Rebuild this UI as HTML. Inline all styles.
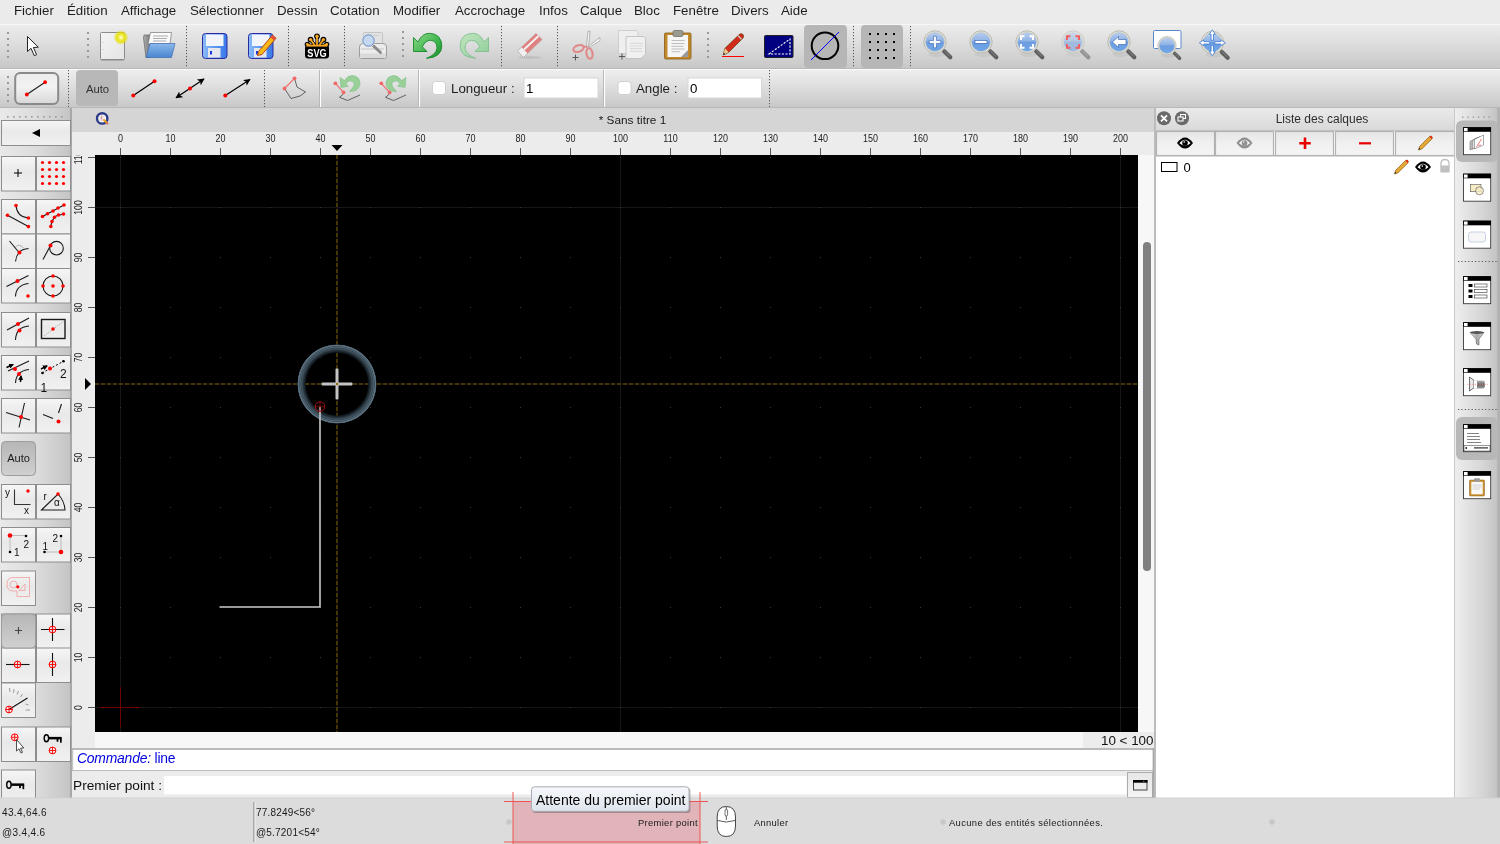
<!DOCTYPE html>
<html><head><meta charset="utf-8">
<style>
*{box-sizing:border-box;margin:0;padding:0}
html,body{width:1500px;height:844px;overflow:hidden;background:#ececec;font-family:"Liberation Sans",sans-serif;color:#222}
.a{position:absolute}
#menu{left:0;top:0;width:1500px;height:24px;background:#ebebeb}
#menu span{position:absolute;top:3px;font-size:13.3px;color:#1e1e1e;white-space:nowrap}
#tb1{left:0;top:24px;width:1500px;height:45px;background:linear-gradient(#ececec,#e0e0e0 35%,#c8c8c8);border-top:1px solid #f6f6f6;border-bottom:1.5px solid #b8b8b8}
#tb2{left:0;top:69px;width:1500px;height:39px;background:linear-gradient(#eeeeee,#e0e0e0 40%,#c8c8c8);border-top:1px solid #fafafa;border-bottom:1.5px solid #b8b8b8}
.vdots{position:absolute;width:2px;background:repeating-linear-gradient(#8a8a8a 0 2px,transparent 2px 5px)}
.vsep{position:absolute;width:1px;background:repeating-linear-gradient(#6a6a6a 0 1px,transparent 1px 3px)}
#ldock{left:0;top:108px;width:72px;height:690px;background:linear-gradient(90deg,#e6e6e6,#d6d6d6 60%,#c4c4c4)}
#doc{left:72px;top:108px;width:1082px;height:690px;background:#ececec}
#doctitle{left:72px;top:108px;width:1082px;height:24px;background:#d5d5d5}
#canvas{left:95px;top:155px;width:1043px;height:577px;background:#000}
#rpanel{left:1154px;top:108px;width:301px;height:690px;background:#fff;border-left:2px solid #bcbcbc}
#rtb{left:1455px;top:108px;width:45px;height:690px;background:linear-gradient(90deg,#efefef,#d8d8d8 60%,#c2c2c2 95%,#b0b0b0)}
#status{left:0;top:798px;width:1500px;height:46px;background:#dcdcdc}
.a{will-change:transform}</style></head><body>
<div id="menu" class="a">
<span style="left:14px">Fichier</span><span style="left:67px">Édition</span><span style="left:121px">Affichage</span><span style="left:190px">Sélectionner</span><span style="left:277px">Dessin</span><span style="left:330px">Cotation</span><span style="left:393px">Modifier</span><span style="left:455px">Accrochage</span><span style="left:539px">Infos</span><span style="left:580px">Calque</span><span style="left:634px">Bloc</span><span style="left:673px">Fenêtre</span><span style="left:731px">Divers</span><span style="left:781px">Aide</span>
</div>
<div id="tb1" class="a"></div>
<div id="tb2" class="a"></div>
<svg class="a" style="left:0;top:24px" width="1500" height="84" viewBox="0 24 1500 84">
<defs>
<linearGradient id="gblue" x1="0" y1="0" x2="0" y2="1"><stop offset="0" stop-color="#b7cdef"/><stop offset=".45" stop-color="#8fb2e6"/><stop offset=".5" stop-color="#6d9de0"/><stop offset="1" stop-color="#6ea6e8"/></linearGradient>
<radialGradient id="gglow"><stop offset="0" stop-color="#ffffff"/><stop offset=".25" stop-color="#f4f060"/><stop offset=".6" stop-color="#e8e000" stop-opacity=".9"/><stop offset="1" stop-color="#e8e000" stop-opacity="0"/></radialGradient>
<linearGradient id="gpage" x1="0" y1="0" x2="1" y2="1"><stop offset="0" stop-color="#f4f4f4"/><stop offset="1" stop-color="#e4e4e4"/></linearGradient>
<linearGradient id="gflop" x1="0" y1="0" x2="1" y2="0"><stop offset="0" stop-color="#8cbcf8"/><stop offset=".5" stop-color="#5a98f0"/><stop offset="1" stop-color="#3a78e8"/></linearGradient>
<linearGradient id="ggreen" x1="0" y1="0" x2="1" y2="1"><stop offset="0" stop-color="#8fd98a"/><stop offset=".6" stop-color="#3cb44a"/><stop offset="1" stop-color="#1e8c32"/></linearGradient>
<linearGradient id="ggreen2" x1="0" y1="0" x2="1" y2="1"><stop offset="0" stop-color="#c4e6c0"/><stop offset="1" stop-color="#8ccc98"/></linearGradient>
<g id="mag">
 <ellipse cx="2" cy="12" rx="9" ry="3" fill="#000" opacity=".05"/>
 <line x1="9.2" y1="9.2" x2="15.3" y2="15.3" stroke="#5e5e5e" stroke-width="4.2" stroke-linecap="round"/>
 <line x1="9.6" y1="9" x2="14.6" y2="14" stroke="#8a8a8a" stroke-width="1" stroke-linecap="round"/>
 <circle r="11.2" fill="#e0e0d6" stroke="#b0b0a6" stroke-width=".8"/>
 <circle r="9.3" fill="url(#gblue)" stroke="#a8b8cc" stroke-width=".6"/>
</g>
</defs>
<!-- handles -->
<g fill="#999">
<rect x="7" y="32" width="2" height="2"/><rect x="7" y="38" width="2" height="2"/><rect x="7" y="44" width="2" height="2"/><rect x="7" y="50" width="2" height="2"/><rect x="7" y="56" width="2" height="2"/>
<rect x="87" y="32" width="2" height="2"/><rect x="87" y="38" width="2" height="2"/><rect x="87" y="44" width="2" height="2"/><rect x="87" y="50" width="2" height="2"/><rect x="87" y="56" width="2" height="2"/>
<rect x="402" y="31" width="2" height="2"/><rect x="402" y="37" width="2" height="2"/><rect x="402" y="43" width="2" height="2"/><rect x="402" y="49" width="2" height="2"/><rect x="402" y="55" width="2" height="2"/>
<rect x="707" y="32" width="2" height="2"/><rect x="707" y="38" width="2" height="2"/><rect x="707" y="44" width="2" height="2"/><rect x="707" y="50" width="2" height="2"/><rect x="707" y="56" width="2" height="2"/>
</g>
<g stroke="#555" stroke-width="1" stroke-dasharray="1.2 1.8">
<line x1="186.5" y1="26" x2="186.5" y2="67"/><line x1="288.5" y1="26" x2="288.5" y2="67"/><line x1="344.5" y1="26" x2="344.5" y2="67"/>
<line x1="501.5" y1="26" x2="501.5" y2="67"/><line x1="557.5" y1="26" x2="557.5" y2="67"/><line x1="853.5" y1="26" x2="853.5" y2="67"/><line x1="910.5" y1="26" x2="910.5" y2="67"/>
</g>
<!-- arrow -->
<path d="M27.5 36.5 L27.5 51.5 L31 48.3 L34.3 55.7 L36.6 54.7 L33.4 47.5 L38.3 47.2 Z" fill="#fff" stroke="#222" stroke-width="1" stroke-linejoin="round"/>
<!-- new doc -->
<defs><linearGradient id="gfold" x1="0" y1="0" x2="0" y2="1"><stop offset="0" stop-color="#8cb8ec"/><stop offset="1" stop-color="#4a86d0"/></linearGradient>
<linearGradient id="gback" x1="0" y1="0" x2="1" y2="0"><stop offset="0" stop-color="#b0b0b0"/><stop offset="1" stop-color="#707070"/></linearGradient></defs>
<rect x="100.5" y="34" width="24" height="27" rx="1.5" fill="#555" opacity=".3"/>
<rect x="100.5" y="32.5" width="24" height="27" rx="1" fill="url(#gpage)" stroke="#8c8c8c"/>
<path d="M102.5 42.5 h1 M102.5 49.5 h1" stroke="#bbb" stroke-width=".8"/>
<circle cx="121" cy="37.5" r="7.5" fill="url(#gglow)"/>
<!-- open folder -->
<path d="M144 35 L151 35 L150 57.5 L146 57.5 L143.5 38 Z" fill="url(#gback)" stroke="#666" stroke-width=".7"/>
<path d="M150.5 32.5 L171.5 32.5 L170 44 L148 44 Z" fill="#fafafa" stroke="#777" stroke-width=".7"/>
<path d="M153 36 L168 36 M153 38.5 L167 38.5 M153 41 L166 41" stroke="#aaa" stroke-width="1.1"/>
<path d="M150 43.5 L175 43.5 L171.5 57.5 L146 57.5 Z" fill="url(#gfold)" stroke="#3c6cb0" stroke-width=".7"/>
<!-- save -->
<g id="floppy">
<rect x="202.5" y="33.5" width="24.5" height="25" rx="3" fill="url(#gflop)" stroke="#2a2aa0" stroke-width="1"/>
<rect x="206" y="34.5" width="17.5" height="11.5" fill="#f2f4fc"/>
<rect x="208" y="48" width="12.5" height="9.5" fill="#e6e6ee"/>
<rect x="210" y="51" width="2" height="3.5" fill="#1a3ae0"/>
</g>
<use href="#floppy" x="46"/>
<path d="M258.5 51.5 L272.5 35 L276 38.3 L262 54.5 L257.5 55.5 Z" fill="#f5b818" stroke="#b03a10" stroke-width=".9"/>
<path d="M272.5 35 L276 38.3 L274 40.5 L270.5 37.2Z" fill="#e84a3a"/>
<!-- svg logo -->
<g stroke="#000" stroke-width="3.2" stroke-linecap="round" fill="none">
<path d="M317 36.5 L317 45 M310.8 39.8 L314.5 45 M323.2 39.8 L319.5 45 M307.5 44.5 L311 45.5 M326.5 44.5 L323 45.5"/>
</g>
<g fill="#000"><circle cx="317" cy="36.3" r="2.9"/><circle cx="310.6" cy="39.6" r="2.9"/><circle cx="323.4" cy="39.6" r="2.9"/><circle cx="307.3" cy="44.3" r="2.6"/><circle cx="326.7" cy="44.3" r="2.6"/></g>
<g stroke="#f7a823" stroke-width="1.8" stroke-linecap="round" fill="none">
<path d="M317 36.5 L317 45 M310.8 39.8 L314.5 45 M323.2 39.8 L319.5 45 M307.5 44.5 L311 45.5 M326.5 44.5 L323 45.5"/>
</g>
<g fill="#f7a823"><circle cx="317" cy="36.3" r="1.7"/><circle cx="310.6" cy="39.6" r="1.7"/><circle cx="323.4" cy="39.6" r="1.7"/><circle cx="307.3" cy="44.3" r="1.4"/><circle cx="326.7" cy="44.3" r="1.4"/></g>
<rect x="305" y="45" width="24" height="13.5" rx="3" fill="#000"/>
<rect x="306.5" y="44.8" width="21" height="1.8" fill="#f7a823"/>
<text transform="translate(317 56.8) scale(.8 1)" font-family="Liberation Sans" font-weight="bold" font-size="11.5" fill="#fff" text-anchor="middle">SVG</text>
<!-- print preview -->
<rect x="363.5" y="32.5" width="19" height="14" rx="1" fill="#e2e2e2" stroke="#c4c4c4"/>
<rect x="367" y="35" width="12" height="1" fill="#cfcfcf"/>
<path d="M359.5 47 Q359.5 43.5 363 43.5 L383 43.5 Q386.5 43.5 386.5 47 L386.5 56.5 Q386.5 58.5 384.5 58.5 L361.5 58.5 Q359.5 58.5 359.5 56.5 Z" fill="#ececec" stroke="#9c9c9c"/>
<rect x="360" y="53.5" width="26" height="4.5" fill="#dadada"/>
<path d="M361 49 L384 49" stroke="#bdbdbd" stroke-width=".8"/>
<line x1="372.5" y1="45" x2="380.5" y2="52.5" stroke="#8a8a8a" stroke-width="3" stroke-linecap="round"/>
<circle cx="368.5" cy="40.5" r="6.6" fill="#e8e8e8"/>
<circle cx="368.5" cy="40.5" r="5.7" fill="#c6d8f0" stroke="#5c88c4" stroke-width="1"/>
<!-- undo -->
<path d="M413.5 37.5 L413.5 51.5 L427 51.5 L422.3 46.8 Q425.5 40.3 430.5 40.3 Q437 41 437 48 Q436.5 54.5 426.5 58.3 Q441.5 57.5 441.8 46 Q441.5 34 429.5 33.3 Q422 33.3 418 42 Z" fill="url(#ggreen)" stroke="#168a2a" stroke-width=".9" stroke-linejoin="round"/>
<!-- redo -->
<path d="M 488.5 37.5 L 488.5 51.5 L 475 51.5 L 479.7 46.8 Q 476.5 40.3 471.5 40.3 Q 465 41 465 48 Q 465.5 54.5 475.5 58.3 Q 460.5 57.5 460.2 46 Q 460.5 34 472.5 33.3 Q 480 33.3 484 42 Z" fill="url(#ggreen2)" stroke="#7fc08e" stroke-width=".9" stroke-linejoin="round"/>
<!-- eraser -->
<ellipse cx="530" cy="57.5" rx="12" ry="1.5" fill="#000" opacity=".08"/>
<path d="M517.5 51 L536 33.5 L542 39.5 L523.5 57.5 Z" fill="#f0f0f0" stroke="#a8a8a8" stroke-width=".8"/>
<path d="M521.5 47.2 L536 33.5 L542 39.5 L527.5 53.2 Z" fill="#e08080"/>
<path d="M524 49.5 L538.5 36" stroke="#f4f4f4" stroke-width="1.8"/>
<!-- scissors -->
<path d="M588 31.3 L590 31.3 L588.5 47 L586.5 47 Z" fill="#fafafa" stroke="#999" stroke-width=".7"/>
<path d="M589 46 L599.8 37.5 L600 40.5 L589.5 47.5 Z" fill="#fafafa" stroke="#999" stroke-width=".7"/>
<ellipse cx="578.5" cy="48.5" rx="5.3" ry="3.2" transform="rotate(-20 578.5 48.5)" fill="none" stroke="#e08a8a" stroke-width="2.2"/>
<ellipse cx="589.5" cy="53.5" rx="3" ry="5.3" transform="rotate(-10 589.5 53.5)" fill="none" stroke="#e08a8a" stroke-width="2.2"/>
<path d="M583.5 47 L587.5 46.5" stroke="#e08a8a" stroke-width="2"/>
<path d="M572.5 57.5 L578.5 57.5 M575.5 54.5 L575.5 60.5" stroke="#555" stroke-width="1"/>
<!-- copy -->
<path d="M618.5 30.5 L636.5 30.5 L638 32 L638 53.5 L618.5 53.5 Z" fill="#efefef" stroke="#c8c8c8" stroke-width=".8"/>
<path d="M626 36.5 L643.5 36.5 L645.5 38.5 L645.5 54 L641 58.5 L626 58.5 Z" fill="#f0f0f0" stroke="#bbb" stroke-width=".8"/>
<path d="M630 43.3 L643 43.3 M630 46 L643 46 M630 48.6 L642 48.6 M630 51.3 L643 51.3" stroke="#d4d4d4" stroke-width=".9"/>
<path d="M619 56.5 L625 56.5 M622 53.5 L622 59.5" stroke="#555" stroke-width="1"/>
<!-- paste -->
<rect x="664.5" y="33" width="26.5" height="26" rx="1.2" fill="#c28a2e" stroke="#8a5a10" stroke-width=".8"/>
<rect x="667.5" y="35" width="20.5" height="22" fill="#f6f6f6"/>
<path d="M681 57 L688 50 L688 57 Z" fill="#999"/>
<rect x="673" y="30.5" width="10" height="6" rx="1.5" fill="#9a9a8e" stroke="#6a6a60" stroke-width=".7"/>
<path d="M671.5 40.5 L684.5 40.5 M671.5 43.5 L684.5 43.5 M671.5 46.3 L683.5 46.3 M671.5 49 L684.5 49 M671.5 51.7 L680 51.7" stroke="#b8b8b8" stroke-width=".9"/>
<!-- pencil -->
<path d="M722 56.5 L744 56.5" stroke="#f00" stroke-width="1"/>
<path d="M723.2 55 L725 48.3 L739.5 34.3 Q741.3 33 743 34.5 Q744.3 36.3 743 38 L728.7 52.3 Z" fill="#d42a1a" stroke="#6a3a10" stroke-width=".8"/>
<path d="M738 35.8 L741.5 39.3" stroke="#ccc" stroke-width="1.4"/>
<path d="M723.2 55 L725 48.3 L728.7 52.3 Z" fill="#e8c890"/>
<path d="M723.2 55 L723.8 52.7 L725.4 54.2 Z" fill="#222"/>
<!-- blue rect -->
<rect x="764.5" y="35.5" width="28.5" height="22" rx="1" fill="#000080" stroke="#222" stroke-width="1"/>
<path d="M769 54 L790 39 L790 54 Z" fill="none" stroke="#fff" stroke-width="1.1" stroke-dasharray="2.2 1.4"/>
<!-- active circle btn -->
<rect x="804" y="25" width="43" height="43" rx="4" fill="#b6b6b6"/>
<circle cx="825" cy="45.8" r="13.3" fill="none" stroke="#000" stroke-width="2"/>
<line x1="811" y1="60" x2="839" y2="32" stroke="#0000ff" stroke-width="1"/>
<!-- grid btn -->
<rect x="861" y="25" width="42" height="43" rx="4" fill="#b6b6b6"/>
<g fill="#000">
<rect x="869" y="33" width="2" height="2"/><rect x="877" y="33" width="2" height="2"/><rect x="885" y="33" width="2" height="2"/><rect x="893" y="33" width="2" height="2"/>
<rect x="869" y="41" width="2" height="2"/><rect x="877" y="41" width="2" height="2"/><rect x="885" y="41" width="2" height="2"/><rect x="893" y="41" width="2" height="2"/>
<rect x="869" y="49" width="2" height="2"/><rect x="877" y="49" width="2" height="2"/><rect x="885" y="49" width="2" height="2"/><rect x="893" y="49" width="2" height="2"/>
<rect x="869" y="57" width="2" height="2"/><rect x="877" y="57" width="2" height="2"/><rect x="885" y="57" width="2" height="2"/><rect x="893" y="57" width="2" height="2"/>
</g>
<!-- zooms -->
<use href="#mag" x="935" y="42"/>
<path d="M933.6 36.2 h2.8 v4.4 h4.4 v2.8 h-4.4 v4.4 h-2.8 v-4.4 h-4.4 v-2.8 h4.4z" fill="#fff" stroke="#2a5aa8" stroke-width=".6"/>
<use href="#mag" x="981" y="42"/>
<rect x="975" y="40.5" width="12" height="2.8" fill="#fff" stroke="#2a5aa8" stroke-width=".6"/>
<use href="#mag" x="1027" y="42"/>
<path d="M1021 40 V36.3 H1024.5 M1029.5 36.3 H1033 V40 M1033 44 V47.7 H1029.5 M1024.5 47.7 H1021 V44" fill="none" stroke="#fff" stroke-width="2"/>
<g opacity=".55"><use href="#mag" x="1073" y="42"/></g>
<path d="M1067 40 V36.3 H1070.5 M1075.5 36.3 H1079 V40 M1079 44 V47.7 H1075.5 M1070.5 47.7 H1067 V44" fill="none" stroke="#f06060" stroke-width="2"/>
<use href="#mag" x="1119" y="42"/>
<path d="M1112.5 42 L1118.5 36.5 L1118.5 39.5 L1126 39.5 L1126 44.5 L1118.5 44.5 L1118.5 47.5 Z" fill="#fff" stroke="#2a5aa8" stroke-width=".6"/>
<rect x="1153.5" y="30.5" width="27.5" height="18" rx="1.2" fill="#fff" stroke="#5a88c8" stroke-width="1"/>
<g transform="translate(1167 45.7) scale(.82)"><use href="#mag"/></g>
<use href="#mag" x="1212.4" y="42.5"/>
<g transform="translate(1212.3 42.8)"><path d="M0 -13 L3 -8.5 L1.2 -8.5 L1.2 -2.5 L-1.2 -2.5 L-1.2 -8.5 L-3 -8.5 Z" transform="rotate(0)" fill="#fff" stroke="#3a76d0" stroke-width=".8" stroke-linejoin="round"/><path d="M0 -13 L3 -8.5 L1.2 -8.5 L1.2 -2.5 L-1.2 -2.5 L-1.2 -8.5 L-3 -8.5 Z" transform="rotate(90)" fill="#fff" stroke="#3a76d0" stroke-width=".8" stroke-linejoin="round"/><path d="M0 -13 L3 -8.5 L1.2 -8.5 L1.2 -2.5 L-1.2 -2.5 L-1.2 -8.5 L-3 -8.5 Z" transform="rotate(180)" fill="#fff" stroke="#3a76d0" stroke-width=".8" stroke-linejoin="round"/><path d="M0 -13 L3 -8.5 L1.2 -8.5 L1.2 -2.5 L-1.2 -2.5 L-1.2 -8.5 L-3 -8.5 Z" transform="rotate(270)" fill="#fff" stroke="#3a76d0" stroke-width=".8" stroke-linejoin="round"/></g>
</svg>

<svg class="a" style="left:0;top:68px" width="800" height="40" viewBox="0 68 800 40">
<defs>
<linearGradient id="gbtn" x1="0" y1="0" x2="0" y2="1"><stop offset="0" stop-color="#ececec"/><stop offset=".45" stop-color="#f2f2f2"/><stop offset="1" stop-color="#d8d8d8"/></linearGradient>
<marker id="ah" viewBox="0 0 10 10" refX="9" refY="5" markerWidth="7" markerHeight="7" orient="auto-start-reverse" markerUnits="userSpaceOnUse"><path d="M0 0 L10 5 L0 10 L2.5 5 Z" fill="#000"/></marker>
</defs>
<g fill="#999">
<rect x="7" y="76" width="2" height="2"/><rect x="7" y="82" width="2" height="2"/><rect x="7" y="88" width="2" height="2"/><rect x="7" y="94" width="2" height="2"/><rect x="7" y="100" width="2" height="2"/>
</g>
<g stroke="#555" stroke-width="1" stroke-dasharray="1.2 1.8">
<line x1="68.5" y1="70" x2="68.5" y2="107"/><line x1="264.5" y1="70" x2="264.5" y2="107"/><line x1="769.5" y1="70" x2="769.5" y2="107"/>
</g>
<g stroke="#fff" stroke-width="1.2"><line x1="320.5" y1="70" x2="320.5" y2="107"/><line x1="419.5" y1="70" x2="419.5" y2="107"/><line x1="604.5" y1="70" x2="604.5" y2="107"/></g>
<g stroke="#b8b8b8" stroke-width="1"><line x1="319.5" y1="70" x2="319.5" y2="107"/><line x1="418.5" y1="70" x2="418.5" y2="107"/><line x1="603.5" y1="70" x2="603.5" y2="107"/></g>
<!-- line btn -->
<rect x="15.2" y="73" width="43" height="31" rx="5" fill="url(#gbtn)" stroke="#8a8a8a" stroke-width="2"/>
<line x1="26.8" y1="94.5" x2="45.1" y2="82.2" stroke="#222" stroke-width="1.2"/>
<circle cx="26.8" cy="94.5" r="1.9" fill="#f00"/><circle cx="45.1" cy="82.2" r="1.9" fill="#f00"/>
<!-- auto -->
<rect x="76" y="70" width="42" height="36" rx="4" fill="#b8b8b8"/>
<text x="97.5" y="92.5" font-family="Liberation Sans" font-size="11.3" fill="#333" text-anchor="middle">Auto</text>
<!-- lines -->
<line x1="133.3" y1="95.5" x2="154.5" y2="81.3" stroke="#000" stroke-width="1.2"/>
<circle cx="133.3" cy="95.5" r="2" fill="#f00"/><circle cx="154.5" cy="81.3" r="2" fill="#f00"/>
<line x1="176" y1="97.8" x2="204" y2="79" stroke="#000" stroke-width="1.2" marker-start="url(#ah)" marker-end="url(#ah)"/>
<circle cx="190" cy="88.5" r="2" fill="#f00"/>
<line x1="225.3" y1="95.5" x2="250" y2="79.5" stroke="#000" stroke-width="1.2" marker-end="url(#ah)"/>
<circle cx="225.3" cy="95.5" r="2" fill="#f00"/>
<!-- polyline -->
<path d="M294.5 78.3 L297 87 L305.5 92 L300 96 L291 98.5 L284.5 88.5" fill="none" stroke="#555" stroke-width=".9"/>
<line x1="284.5" y1="88.5" x2="294.5" y2="78.3" stroke="#f06868" stroke-width="1.1"/>
<circle cx="284.5" cy="88.5" r="1.9" fill="#f06868"/><circle cx="294.5" cy="78.3" r="1.9" fill="#f06868"/>
<!-- undo poly -->
<path d="M343.5 94 L339.5 97.3 L347.5 100.5 L360 95" fill="none" stroke="#555" stroke-width=".9"/>
<line x1="335.4" y1="83.3" x2="343.5" y2="92.3" stroke="#f06868" stroke-width="1.1"/>
<circle cx="335.4" cy="83.3" r="1.9" fill="#f06868"/><circle cx="343.5" cy="92.3" r="1.9" fill="#f06868"/>
<path d="M340 77.5 L341 87.5 L348.3 86.3 L346 83.5 Q349 79.5 352.5 81.5 Q356 84.5 352 88.5 L349.5 91.5 Q358 92 360 84.5 Q360.5 76.5 352.5 75.5 Q347.5 75.5 344.5 80.5 Z" fill="#98d098" stroke="#80c088" stroke-width=".6" stroke-linejoin="round"/>
<!-- redo poly -->
<path d="M389.5 94 L385.5 97.3 L393.5 100.5 L406 95" fill="none" stroke="#555" stroke-width=".9"/>
<line x1="381.3" y1="83.3" x2="389.6" y2="92.3" stroke="#f06868" stroke-width="1.1"/>
<circle cx="381.3" cy="83.3" r="1.9" fill="#f06868"/><circle cx="389.6" cy="92.3" r="1.9" fill="#f06868"/>
<path d="M406 77.5 L405 87.5 L397.7 86.3 L400 83.5 Q397 79.5 393.5 81.5 Q390 84.5 394 88.5 L396.5 91.5 Q388 92 386 84.5 Q385.5 76.5 393.5 75.5 Q398.5 75.5 401.5 80.5 Z" fill="#98d098" stroke="#80c088" stroke-width=".6" stroke-linejoin="round"/>
<!-- checkboxes -->
<rect x="432.5" y="81.5" width="13" height="13" rx="3" fill="#fff" stroke="#d0d0d0" stroke-width="1"/>
<rect x="618" y="81.5" width="13" height="13" rx="3" fill="#fff" stroke="#d0d0d0" stroke-width="1"/>
<text x="451" y="93" font-family="Liberation Sans" font-size="13.3" fill="#1e1e1e">Longueur :</text>
<text x="636" y="93" font-family="Liberation Sans" font-size="13.3" fill="#1e1e1e">Angle :</text>
<rect x="524" y="78" width="74" height="20" fill="#fff" stroke="#d6d6d6" stroke-width="1"/>
<rect x="688" y="78" width="73.5" height="20" fill="#fff" stroke="#d6d6d6" stroke-width="1"/>
<text x="526" y="93" font-family="Liberation Sans" font-size="13.3" fill="#000">1</text>
<text x="690" y="93" font-family="Liberation Sans" font-size="13.3" fill="#000">0</text>
</svg>

<!--DOCK-->
<svg class="a" style="left:0;top:108px" width="72" height="690" viewBox="0 108 72 690">
<defs>
<linearGradient id="dockbg" x1="0" y1="0" x2="1" y2="0"><stop offset="0" stop-color="#e9e9e9"/><stop offset=".5" stop-color="#dcdcdc"/><stop offset=".95" stop-color="#c6c6c6"/><stop offset="1" stop-color="#b8b8b8"/></linearGradient>
<linearGradient id="dbtn" x1="0" y1="0" x2="0" y2="1"><stop offset="0" stop-color="#f6f6f6"/><stop offset=".45" stop-color="#e9e9e9"/><stop offset="1" stop-color="#f1f1f1"/></linearGradient>
<marker id="dah" viewBox="0 0 10 10" refX="8" refY="5" markerWidth="5" markerHeight="5" orient="auto" markerUnits="userSpaceOnUse"><path d="M0 0 L10 5 L0 10 Z" fill="#000"/></marker>
<g id="rc"><circle r="3.4" fill="none" stroke="#f00" stroke-width="1"/><path d="M-3.4 0H3.4M0 -3.4V3.4" stroke="#f00" stroke-width=".9"/></g>
</defs>
<rect x="0" y="108" width="72" height="690" fill="url(#dockbg)"/>
<rect x="70" y="108" width="2" height="690" fill="#a9a9a9"/>
<g fill="#9a9a9a"><rect x="7" y="116" width="1.6" height="1.6"/><rect x="13" y="116" width="1.6" height="1.6"/><rect x="19" y="116" width="1.6" height="1.6"/><rect x="25" y="116" width="1.6" height="1.6"/><rect x="31" y="116" width="1.6" height="1.6"/><rect x="37" y="116" width="1.6" height="1.6"/><rect x="43" y="116" width="1.6" height="1.6"/><rect x="49" y="116" width="1.6" height="1.6"/><rect x="55" y="116" width="1.6" height="1.6"/><rect x="61" y="116" width="1.6" height="1.6"/></g>
<rect x="1.5" y="120.5" width="69" height="25" fill="url(#dbtn)" stroke="#8e8e8e" stroke-width="1"/>
<path d="M32 133 L40 129 L40 137 Z" fill="#000"/>
<rect x="1.5" y="156.5" width="34" height="34.5" fill="url(#dbtn)" stroke="#8e8e8e" stroke-width="1"/>
<rect x="36.5" y="156.5" width="34" height="34.5" fill="url(#dbtn)" stroke="#8e8e8e" stroke-width="1"/>
<rect x="1.5" y="199.5" width="34" height="34.5" fill="url(#dbtn)" stroke="#8e8e8e" stroke-width="1"/>
<rect x="36.5" y="199.5" width="34" height="34.5" fill="url(#dbtn)" stroke="#8e8e8e" stroke-width="1"/>
<rect x="1.5" y="234.0" width="34" height="34.5" fill="url(#dbtn)" stroke="#8e8e8e" stroke-width="1"/>
<rect x="36.5" y="234.0" width="34" height="34.5" fill="url(#dbtn)" stroke="#8e8e8e" stroke-width="1"/>
<rect x="1.5" y="268.5" width="34" height="34.5" fill="url(#dbtn)" stroke="#8e8e8e" stroke-width="1"/>
<rect x="36.5" y="268.5" width="34" height="34.5" fill="url(#dbtn)" stroke="#8e8e8e" stroke-width="1"/>
<rect x="1.5" y="312.5" width="34" height="34.5" fill="url(#dbtn)" stroke="#8e8e8e" stroke-width="1"/>
<rect x="36.5" y="312.5" width="34" height="34.5" fill="url(#dbtn)" stroke="#8e8e8e" stroke-width="1"/>
<rect x="1.5" y="355.5" width="34" height="34.5" fill="url(#dbtn)" stroke="#8e8e8e" stroke-width="1"/>
<rect x="36.5" y="355.5" width="34" height="34.5" fill="url(#dbtn)" stroke="#8e8e8e" stroke-width="1"/>
<rect x="1.5" y="398.5" width="34" height="34.5" fill="url(#dbtn)" stroke="#8e8e8e" stroke-width="1"/>
<rect x="36.5" y="398.5" width="34" height="34.5" fill="url(#dbtn)" stroke="#8e8e8e" stroke-width="1"/>
<rect x="1.5" y="484.5" width="34" height="34.5" fill="url(#dbtn)" stroke="#8e8e8e" stroke-width="1"/>
<rect x="36.5" y="484.5" width="34" height="34.5" fill="url(#dbtn)" stroke="#8e8e8e" stroke-width="1"/>
<rect x="1.5" y="527.5" width="34" height="34.5" fill="url(#dbtn)" stroke="#8e8e8e" stroke-width="1"/>
<rect x="36.5" y="527.5" width="34" height="34.5" fill="url(#dbtn)" stroke="#8e8e8e" stroke-width="1"/>
<rect x="1.5" y="571.0" width="34" height="34.5" fill="url(#dbtn)" stroke="#8e8e8e" stroke-width="1"/>
<rect x="1.5" y="614.0" width="34" height="34.5" fill="url(#dbtn)" stroke="#8e8e8e" stroke-width="1"/>
<rect x="36.5" y="614.0" width="34" height="34.5" fill="url(#dbtn)" stroke="#8e8e8e" stroke-width="1"/>
<rect x="1.5" y="648.0" width="34" height="34.5" fill="url(#dbtn)" stroke="#8e8e8e" stroke-width="1"/>
<rect x="36.5" y="648.0" width="34" height="34.5" fill="url(#dbtn)" stroke="#8e8e8e" stroke-width="1"/>
<rect x="1.5" y="683.0" width="34" height="34.5" fill="url(#dbtn)" stroke="#8e8e8e" stroke-width="1"/>
<rect x="1.5" y="727.0" width="34" height="34.5" fill="url(#dbtn)" stroke="#8e8e8e" stroke-width="1"/>
<rect x="36.5" y="727.0" width="34" height="34.5" fill="url(#dbtn)" stroke="#8e8e8e" stroke-width="1"/>
<rect x="1.5" y="770.0" width="34" height="34.5" fill="url(#dbtn)" stroke="#8e8e8e" stroke-width="1"/>
<linearGradient id="autog" x1="0" y1="0" x2="0" y2="1"><stop offset="0" stop-color="#b6b6b6"/><stop offset="1" stop-color="#d0d0d0"/></linearGradient><rect x="1.5" y="441.5" width="34" height="34" rx="4" fill="url(#autog)" stroke="#9c9c9c" stroke-width="1"/>
<text x="18.5" y="462.3" font-family="Liberation Sans" font-size="11" fill="#1a1a1a" text-anchor="middle">Auto</text>
<rect x="1.5" y="614" width="34" height="34" rx="4" fill="url(#autog)" stroke="#9c9c9c" stroke-width="1"/>
<path d="M14 173 H22 M18 169 V177" stroke="#000" stroke-width="1"/>
<circle cx="42.5" cy="162.5" r="1.6" fill="#f00"/>
<circle cx="42.5" cy="169.5" r="1.6" fill="#f00"/>
<circle cx="42.5" cy="176.5" r="1.6" fill="#f00"/>
<circle cx="42.5" cy="183.5" r="1.6" fill="#f00"/>
<circle cx="49.5" cy="162.5" r="1.6" fill="#f00"/>
<circle cx="49.5" cy="169.5" r="1.6" fill="#f00"/>
<circle cx="49.5" cy="176.5" r="1.6" fill="#f00"/>
<circle cx="49.5" cy="183.5" r="1.6" fill="#f00"/>
<circle cx="56.5" cy="162.5" r="1.6" fill="#f00"/>
<circle cx="56.5" cy="169.5" r="1.6" fill="#f00"/>
<circle cx="56.5" cy="176.5" r="1.6" fill="#f00"/>
<circle cx="56.5" cy="183.5" r="1.6" fill="#f00"/>
<circle cx="63.5" cy="162.5" r="1.6" fill="#f00"/>
<circle cx="63.5" cy="169.5" r="1.6" fill="#f00"/>
<circle cx="63.5" cy="176.5" r="1.6" fill="#f00"/>
<circle cx="63.5" cy="183.5" r="1.6" fill="#f00"/>
<path d="M7.5 215.3 L28.4 226.6 M16 205.5 Q17 217 28.4 218" stroke="#1a1a1a" stroke-width="1.1" fill="none"/>
<circle cx="7.5" cy="215.3" r="1.8" fill="#f00"/>
<circle cx="28.4" cy="226.6" r="1.8" fill="#f00"/>
<circle cx="16" cy="205.5" r="1.8" fill="#f00"/>
<circle cx="28.4" cy="218" r="1.8" fill="#f00"/>
<path d="M42.5 216.5 L64 205 M50.8 226.5 Q52 219 56 216 L63.5 214" stroke="#1a1a1a" stroke-width="1.1" fill="none"/>
<circle cx="42.5" cy="216.5" r="1.8" fill="#f00"/>
<circle cx="47.5" cy="213.8" r="1.8" fill="#f00"/>
<circle cx="53" cy="211" r="1.8" fill="#f00"/>
<circle cx="58" cy="208" r="1.8" fill="#f00"/>
<circle cx="64" cy="205" r="1.8" fill="#f00"/>
<circle cx="50.8" cy="226.5" r="1.8" fill="#f00"/>
<circle cx="52" cy="221.5" r="1.8" fill="#f00"/>
<circle cx="54.5" cy="217.3" r="1.8" fill="#f00"/>
<circle cx="58.5" cy="215" r="1.8" fill="#f00"/>
<circle cx="63.5" cy="214" r="1.8" fill="#f00"/>
<path d="M9.5 241 L19 252.5 M19 252.5 Q22 249 28.5 248.5 M19 252.5 Q16 256 15.5 261.5" stroke="#1a1a1a" stroke-width="1.1" fill="none"/><path d="M15 247.5 Q19 243 23.5 248" stroke="#333" stroke-width=".6" fill="none" stroke-dasharray="1 .8"/>

<circle cx="19.5" cy="252.5" r="2" fill="#f00"/>
<circle cx="56.5" cy="248.2" r="6.8" stroke="#1a1a1a" stroke-width="1.1" fill="none"/><path d="M43 259.5 L50.5 245.5" stroke="#1a1a1a" stroke-width="1.1" fill="none"/>
<circle cx="50.5" cy="245.5" r="2" fill="#f00"/>
<path d="M6.5 286.5 L28.5 275.5 M15.5 296.5 Q16 285 28.5 283.5" stroke="#1a1a1a" stroke-width="1.1" fill="none"/>
<circle cx="17.5" cy="281" r="2" fill="#f00"/>
<circle cx="28" cy="296" r="1.8" fill="#f00"/>
<circle cx="53" cy="286" r="10" stroke="#1a1a1a" stroke-width="1.1" fill="none"/>
<circle cx="53" cy="276" r="1.8" fill="#f00"/>
<circle cx="43" cy="286" r="1.8" fill="#f00"/>
<circle cx="63" cy="286" r="1.8" fill="#f00"/>
<circle cx="53" cy="296" r="1.8" fill="#f00"/>
<circle cx="53" cy="286" r="1.8" fill="#f00"/>
<path d="M7 330 L29 318 M15.5 340 Q16 327 29 326" stroke="#1a1a1a" stroke-width="1.1" fill="none"/>
<circle cx="18" cy="324" r="2" fill="#f00"/>
<circle cx="19.5" cy="330.5" r="2" fill="#f00"/>
<rect x="41.5" y="319.5" width="23.5" height="19" fill="none" stroke="#1a1a1a" stroke-width="1.4"/>
<path d="M44 336 L64 321" stroke="#999" stroke-width=".8" stroke-dasharray="1.5 1.2"/>
<circle cx="53" cy="329" r="1.8" fill="#f00"/>
<path d="M8 371 L29 361 M15.5 383 Q16 371 29 369.5" stroke="#1a1a1a" stroke-width="1.1" fill="none"/>
<path d="M6.5 367.5 L13 364.5" stroke="#000" stroke-width="1.5" marker-end="url(#dah)"/>
<path d="M20.5 382 L21 376" stroke="#000" stroke-width="1.5" marker-end="url(#dah)"/>
<circle cx="15" cy="369" r="2" fill="#f00"/>
<circle cx="19" cy="374" r="2" fill="#f00"/>
<path d="M42 373 L64 361" stroke="#000" stroke-width="1" stroke-dasharray="2 2"/>
<path d="M41 369 L47 366" stroke="#000" stroke-width="1.5" marker-end="url(#dah)"/>
<circle cx="42.5" cy="373" r="1.3" fill="#000"/><circle cx="63.5" cy="361.2" r="1.3" fill="#000"/>
<circle cx="50" cy="368.5" r="2" fill="#f00"/>
<text x="40.5" y="391.5" font-family="Liberation Sans" font-size="12" fill="#111">1</text><text x="60" y="377.5" font-family="Liberation Sans" font-size="12" fill="#111">2</text>
<path d="M6 412.5 L30 420 M19 427.5 L24.5 403" stroke="#1a1a1a" stroke-width="1.1" fill="none"/>
<circle cx="21" cy="417" r="2" fill="#f00"/>
<path d="M43 414.5 L53 418.5 M58.5 413 L61.5 404" stroke="#1a1a1a" stroke-width="1.1" fill="none"/>
<circle cx="58.5" cy="421.5" r="2" fill="#f00"/>
<text x="5" y="496" font-family="Liberation Sans" font-size="10" fill="#111">y</text><text x="24" y="513.5" font-family="Liberation Sans" font-size="10" fill="#111">x</text>
<path d="M14.5 489.5 V504.5 H30.5" stroke="#333" stroke-width="1.1" fill="none"/>
<circle cx="28" cy="491" r="1.7" fill="#f00"/>
<text x="43.5" y="500" font-family="Liberation Sans" font-size="10" fill="#111">r</text><text x="54" y="506" font-family="Liberation Sans" font-size="10" fill="#111">α</text>
<path d="M41.5 510 L58 494 Q64.5 501 65 510 Z" stroke="#1a1a1a" stroke-width="1.1" fill="none"/>
<circle cx="58" cy="494" r="1.8" fill="#f00"/>
<path d="M10 535.5 H26 M10 535.5 V552" stroke="#bbb" stroke-width="1"/>
<circle cx="10" cy="535.5" r="2.3" fill="#f00"/>
<circle cx="26" cy="536" r="1.3" fill="#000"/><circle cx="10" cy="552" r="1.3" fill="#000"/>
<text x="23.5" y="548" font-family="Liberation Sans" font-size="10" fill="#111">2</text><text x="14" y="555.5" font-family="Liberation Sans" font-size="10" fill="#111">1</text>
<path d="M44.5 552 H61 M61 536 V552" stroke="#bbb" stroke-width="1"/>
<circle cx="61" cy="552" r="2.3" fill="#f00"/>
<circle cx="61" cy="536" r="1.3" fill="#000"/><circle cx="44.5" cy="552" r="1.3" fill="#000"/>
<text x="52.5" y="541.5" font-family="Liberation Sans" font-size="10" fill="#111">2</text><text x="42.5" y="549.5" font-family="Liberation Sans" font-size="10" fill="#111">1</text>
<path d="M7 584 Q7 577.5 13 577.5 H29.5 V596.5 H17 V591 H13 Q7 591 7 584 Z" fill="none" stroke="#f0a0a0" stroke-width=".8"/>
<circle cx="13.5" cy="584.5" r="3.5" fill="none" stroke="#f0a0a0" stroke-width=".8"/><path d="M19 590.5 L25 584 V590.5 Z" fill="none" stroke="#f0a0a0" stroke-width=".8"/>
<circle cx="17.8" cy="586.8" r="1.6" fill="#f00"/>
<path d="M15 630.5 H22 M18.5 627 V634" stroke="#444" stroke-width="1.1"/>
<path d="M41 629.5 H64.5 M52.5 618 V641" stroke="#111" stroke-width="1.1"/>
<use href="#rc" x="52.5" y="629.5"/>
<path d="M6 664.5 H29.5" stroke="#111" stroke-width="1.1"/><use href="#rc" x="17.5" y="664.5"/>
<path d="M52.5 653 V676" stroke="#111" stroke-width="1.1"/><use href="#rc" x="52.5" y="664.5"/>
<path d="M9 709.5 L27.5 698" stroke="#111" stroke-width="1.1"/><use href="#rc" x="9" y="709.5"/>
<path d="M9.5 688 L10 692 M14 689 L13.5 693 M18.5 691 L17 694.5 M22.5 694 L20.5 697 M25.5 704 L28.5 705 M25.5 710 H30" stroke="#999" stroke-width="1"/>
<use href="#rc" x="14.7" y="737.3"/>
<path d="M16.5 739.5 L16.5 751 L19 748.8 L21 753 L22.5 752.3 L20.6 748.2 L23.8 748 Z" fill="#fff" stroke="#222" stroke-width=".8" stroke-linejoin="round"/>
<g id="key"><ellipse cx="46.4" cy="738.2" rx="2.2" ry="3.5" fill="none" stroke="#000" stroke-width="1.4"/><rect x="48.4" y="736.9" width="13.3" height="2.5" fill="#000"/><rect x="56.6" y="738.5" width="1.8" height="3.2" fill="#000"/><rect x="60" y="738.5" width="1.7" height="4.2" fill="#000"/></g>
<use href="#rc" x="52.5" y="750.5"/>
<use href="#key" x="-37.5" y="46.5"/>
</svg>
<!--/DOCK-->
<!--DOC-->
<svg class="a" style="left:72px;top:108px" width="1082" height="690" viewBox="72 108 1082 690" shape-rendering="auto">
<rect x="72" y="108" width="1082" height="24" fill="#d5d5d5"/>
<rect x="72" y="132" width="1082" height="616" fill="#ececec"/>
<circle cx="102.2" cy="118.4" r="5.2" fill="#f4f4f6" stroke="#2c3c88" stroke-width="2.4"/>
<path d="M99.5 116.5 L104 120 M100 119.5 L103.5 116 M101.5 115 V121" stroke="#c06060" stroke-width=".5" opacity=".8"/>
<path d="M103.5 119.5 L107 123" stroke="#f0a020" stroke-width="2"/>
<circle cx="107.3" cy="123.4" r="1.2" fill="#e07070"/>
<text x="632.5" y="124" font-family="Liberation Sans" font-size="11.8" fill="#1a1a1a" text-anchor="middle">* Sans titre 1</text>
<rect x="95" y="155" width="1043" height="577" fill="#000"/>
<rect x="120" y="155" width="1" height="577" fill="#161616"/>
<rect x="620" y="155" width="1" height="577" fill="#161616"/>
<rect x="1120" y="155" width="1" height="577" fill="#161616"/>
<rect x="95" y="207" width="1043" height="1" fill="#161616"/>
<rect x="95" y="707" width="1043" height="1" fill="#161616"/>
<path d="M120 707h1v1h-1zM120 657h1v1h-1zM120 607h1v1h-1zM120 557h1v1h-1zM120 507h1v1h-1zM120 457h1v1h-1zM120 407h1v1h-1zM120 357h1v1h-1zM120 307h1v1h-1zM120 257h1v1h-1zM120 207h1v1h-1zM120 157h1v1h-1zM170 707h1v1h-1zM170 657h1v1h-1zM170 607h1v1h-1zM170 557h1v1h-1zM170 507h1v1h-1zM170 457h1v1h-1zM170 407h1v1h-1zM170 357h1v1h-1zM170 307h1v1h-1zM170 257h1v1h-1zM170 207h1v1h-1zM170 157h1v1h-1zM220 707h1v1h-1zM220 657h1v1h-1zM220 607h1v1h-1zM220 557h1v1h-1zM220 507h1v1h-1zM220 457h1v1h-1zM220 407h1v1h-1zM220 357h1v1h-1zM220 307h1v1h-1zM220 257h1v1h-1zM220 207h1v1h-1zM220 157h1v1h-1zM270 707h1v1h-1zM270 657h1v1h-1zM270 607h1v1h-1zM270 557h1v1h-1zM270 507h1v1h-1zM270 457h1v1h-1zM270 407h1v1h-1zM270 357h1v1h-1zM270 307h1v1h-1zM270 257h1v1h-1zM270 207h1v1h-1zM270 157h1v1h-1zM320 707h1v1h-1zM320 657h1v1h-1zM320 607h1v1h-1zM320 557h1v1h-1zM320 507h1v1h-1zM320 457h1v1h-1zM320 407h1v1h-1zM320 357h1v1h-1zM320 307h1v1h-1zM320 257h1v1h-1zM320 207h1v1h-1zM320 157h1v1h-1zM370 707h1v1h-1zM370 657h1v1h-1zM370 607h1v1h-1zM370 557h1v1h-1zM370 507h1v1h-1zM370 457h1v1h-1zM370 407h1v1h-1zM370 357h1v1h-1zM370 307h1v1h-1zM370 257h1v1h-1zM370 207h1v1h-1zM370 157h1v1h-1zM420 707h1v1h-1zM420 657h1v1h-1zM420 607h1v1h-1zM420 557h1v1h-1zM420 507h1v1h-1zM420 457h1v1h-1zM420 407h1v1h-1zM420 357h1v1h-1zM420 307h1v1h-1zM420 257h1v1h-1zM420 207h1v1h-1zM420 157h1v1h-1zM470 707h1v1h-1zM470 657h1v1h-1zM470 607h1v1h-1zM470 557h1v1h-1zM470 507h1v1h-1zM470 457h1v1h-1zM470 407h1v1h-1zM470 357h1v1h-1zM470 307h1v1h-1zM470 257h1v1h-1zM470 207h1v1h-1zM470 157h1v1h-1zM520 707h1v1h-1zM520 657h1v1h-1zM520 607h1v1h-1zM520 557h1v1h-1zM520 507h1v1h-1zM520 457h1v1h-1zM520 407h1v1h-1zM520 357h1v1h-1zM520 307h1v1h-1zM520 257h1v1h-1zM520 207h1v1h-1zM520 157h1v1h-1zM570 707h1v1h-1zM570 657h1v1h-1zM570 607h1v1h-1zM570 557h1v1h-1zM570 507h1v1h-1zM570 457h1v1h-1zM570 407h1v1h-1zM570 357h1v1h-1zM570 307h1v1h-1zM570 257h1v1h-1zM570 207h1v1h-1zM570 157h1v1h-1zM620 707h1v1h-1zM620 657h1v1h-1zM620 607h1v1h-1zM620 557h1v1h-1zM620 507h1v1h-1zM620 457h1v1h-1zM620 407h1v1h-1zM620 357h1v1h-1zM620 307h1v1h-1zM620 257h1v1h-1zM620 207h1v1h-1zM620 157h1v1h-1zM670 707h1v1h-1zM670 657h1v1h-1zM670 607h1v1h-1zM670 557h1v1h-1zM670 507h1v1h-1zM670 457h1v1h-1zM670 407h1v1h-1zM670 357h1v1h-1zM670 307h1v1h-1zM670 257h1v1h-1zM670 207h1v1h-1zM670 157h1v1h-1zM720 707h1v1h-1zM720 657h1v1h-1zM720 607h1v1h-1zM720 557h1v1h-1zM720 507h1v1h-1zM720 457h1v1h-1zM720 407h1v1h-1zM720 357h1v1h-1zM720 307h1v1h-1zM720 257h1v1h-1zM720 207h1v1h-1zM720 157h1v1h-1zM770 707h1v1h-1zM770 657h1v1h-1zM770 607h1v1h-1zM770 557h1v1h-1zM770 507h1v1h-1zM770 457h1v1h-1zM770 407h1v1h-1zM770 357h1v1h-1zM770 307h1v1h-1zM770 257h1v1h-1zM770 207h1v1h-1zM770 157h1v1h-1zM820 707h1v1h-1zM820 657h1v1h-1zM820 607h1v1h-1zM820 557h1v1h-1zM820 507h1v1h-1zM820 457h1v1h-1zM820 407h1v1h-1zM820 357h1v1h-1zM820 307h1v1h-1zM820 257h1v1h-1zM820 207h1v1h-1zM820 157h1v1h-1zM870 707h1v1h-1zM870 657h1v1h-1zM870 607h1v1h-1zM870 557h1v1h-1zM870 507h1v1h-1zM870 457h1v1h-1zM870 407h1v1h-1zM870 357h1v1h-1zM870 307h1v1h-1zM870 257h1v1h-1zM870 207h1v1h-1zM870 157h1v1h-1zM920 707h1v1h-1zM920 657h1v1h-1zM920 607h1v1h-1zM920 557h1v1h-1zM920 507h1v1h-1zM920 457h1v1h-1zM920 407h1v1h-1zM920 357h1v1h-1zM920 307h1v1h-1zM920 257h1v1h-1zM920 207h1v1h-1zM920 157h1v1h-1zM970 707h1v1h-1zM970 657h1v1h-1zM970 607h1v1h-1zM970 557h1v1h-1zM970 507h1v1h-1zM970 457h1v1h-1zM970 407h1v1h-1zM970 357h1v1h-1zM970 307h1v1h-1zM970 257h1v1h-1zM970 207h1v1h-1zM970 157h1v1h-1zM1020 707h1v1h-1zM1020 657h1v1h-1zM1020 607h1v1h-1zM1020 557h1v1h-1zM1020 507h1v1h-1zM1020 457h1v1h-1zM1020 407h1v1h-1zM1020 357h1v1h-1zM1020 307h1v1h-1zM1020 257h1v1h-1zM1020 207h1v1h-1zM1020 157h1v1h-1zM1070 707h1v1h-1zM1070 657h1v1h-1zM1070 607h1v1h-1zM1070 557h1v1h-1zM1070 507h1v1h-1zM1070 457h1v1h-1zM1070 407h1v1h-1zM1070 357h1v1h-1zM1070 307h1v1h-1zM1070 257h1v1h-1zM1070 207h1v1h-1zM1070 157h1v1h-1zM1120 707h1v1h-1zM1120 657h1v1h-1zM1120 607h1v1h-1zM1120 557h1v1h-1zM1120 507h1v1h-1zM1120 457h1v1h-1zM1120 407h1v1h-1zM1120 357h1v1h-1zM1120 307h1v1h-1zM1120 257h1v1h-1zM1120 207h1v1h-1zM1120 157h1v1h-1z" fill="#3a3a3a"/>
<rect x="100" y="707" width="40" height="1" fill="#6e0000"/><rect x="120" y="687" width="1" height="40" fill="#6e0000"/>
<path d="M219.5 607 L320 607 L320 407" fill="none" stroke="#cacaca" stroke-width="1.6"/>
<line x1="95" y1="384" x2="1138" y2="384" stroke="#1e1600" stroke-width="1"/><line x1="337" y1="155" x2="337" y2="732" stroke="#1e1600" stroke-width="1"/>
<line x1="95" y1="384" x2="1138" y2="384" stroke="#7c5e08" stroke-width="1" stroke-dasharray="4 2"/>
<line x1="337" y1="155" x2="337" y2="732" stroke="#7c5e08" stroke-width="1" stroke-dasharray="4 2"/>
<defs><radialGradient id="ring" cx="337" cy="384" r="40" gradientUnits="userSpaceOnUse">
<stop offset="0" stop-color="#000" stop-opacity="0"/><stop offset=".76" stop-color="#0a0e12" stop-opacity="0"/>
<stop offset=".8" stop-color="#141c22"/><stop offset=".85" stop-color="#2a3842"/><stop offset=".88" stop-color="#42545f"/><stop offset=".9" stop-color="#34444f"/><stop offset=".92" stop-color="#506572"/><stop offset=".94" stop-color="#3e505c"/><stop offset=".96" stop-color="#627a8a"/><stop offset=".98" stop-color="#4a5c68"/><stop offset="1" stop-color="#000" stop-opacity="0"/></radialGradient></defs>
<circle cx="337" cy="384" r="40" fill="url(#ring)"/>
<path d="M320 407 L320 420" stroke="#cacaca" stroke-width="1.6"/>
<rect x="321.5" y="382.5" width="31" height="3" rx="1" fill="#c4c4c4"/><rect x="335.5" y="368.5" width="3" height="31" rx="1" fill="#c4c4c4"/>
<circle cx="337" cy="384" r="1.2" fill="#8a680a"/>
<circle cx="320" cy="406.7" r="4.8" fill="none" stroke="#b01010" stroke-width="1"/><path d="M315 406.7 H325 M320 402 V411" stroke="#901010" stroke-width=".8"/>
<rect x="120" y="148" width="1" height="7" fill="#555"/>
<rect x="170" y="148" width="1" height="7" fill="#555"/>
<rect x="220" y="148" width="1" height="7" fill="#555"/>
<rect x="270" y="148" width="1" height="7" fill="#555"/>
<rect x="320" y="148" width="1" height="7" fill="#555"/>
<rect x="370" y="148" width="1" height="7" fill="#555"/>
<rect x="420" y="148" width="1" height="7" fill="#555"/>
<rect x="470" y="148" width="1" height="7" fill="#555"/>
<rect x="520" y="148" width="1" height="7" fill="#555"/>
<rect x="570" y="148" width="1" height="7" fill="#555"/>
<rect x="620" y="148" width="1" height="7" fill="#555"/>
<rect x="670" y="148" width="1" height="7" fill="#555"/>
<rect x="720" y="148" width="1" height="7" fill="#555"/>
<rect x="770" y="148" width="1" height="7" fill="#555"/>
<rect x="820" y="148" width="1" height="7" fill="#555"/>
<rect x="870" y="148" width="1" height="7" fill="#555"/>
<rect x="920" y="148" width="1" height="7" fill="#555"/>
<rect x="970" y="148" width="1" height="7" fill="#555"/>
<rect x="1020" y="148" width="1" height="7" fill="#555"/>
<rect x="1070" y="148" width="1" height="7" fill="#555"/>
<rect x="1120" y="148" width="1" height="7" fill="#555"/>
<g font-family="Liberation Sans" font-size="10" fill="#1e1e1e"><text transform="translate(120.5 141.8) scale(.9 1)" text-anchor="middle">0</text><text transform="translate(170.5 141.8) scale(.9 1)" text-anchor="middle">10</text><text transform="translate(220.5 141.8) scale(.9 1)" text-anchor="middle">20</text><text transform="translate(270.5 141.8) scale(.9 1)" text-anchor="middle">30</text><text transform="translate(320.5 141.8) scale(.9 1)" text-anchor="middle">40</text><text transform="translate(370.5 141.8) scale(.9 1)" text-anchor="middle">50</text><text transform="translate(420.5 141.8) scale(.9 1)" text-anchor="middle">60</text><text transform="translate(470.5 141.8) scale(.9 1)" text-anchor="middle">70</text><text transform="translate(520.5 141.8) scale(.9 1)" text-anchor="middle">80</text><text transform="translate(570.5 141.8) scale(.9 1)" text-anchor="middle">90</text><text transform="translate(620.5 141.8) scale(.9 1)" text-anchor="middle">100</text><text transform="translate(670.5 141.8) scale(.9 1)" text-anchor="middle">110</text><text transform="translate(720.5 141.8) scale(.9 1)" text-anchor="middle">120</text><text transform="translate(770.5 141.8) scale(.9 1)" text-anchor="middle">130</text><text transform="translate(820.5 141.8) scale(.9 1)" text-anchor="middle">140</text><text transform="translate(870.5 141.8) scale(.9 1)" text-anchor="middle">150</text><text transform="translate(920.5 141.8) scale(.9 1)" text-anchor="middle">160</text><text transform="translate(970.5 141.8) scale(.9 1)" text-anchor="middle">170</text><text transform="translate(1020.5 141.8) scale(.9 1)" text-anchor="middle">180</text><text transform="translate(1070.5 141.8) scale(.9 1)" text-anchor="middle">190</text><text transform="translate(1120.5 141.8) scale(.9 1)" text-anchor="middle">200</text></g>
<path d="M331.5 145 L342.5 145 L337 151 Z" fill="#000"/>
<rect x="88" y="707" width="7" height="1" fill="#555"/>
<rect x="88" y="657" width="7" height="1" fill="#555"/>
<rect x="88" y="607" width="7" height="1" fill="#555"/>
<rect x="88" y="557" width="7" height="1" fill="#555"/>
<rect x="88" y="507" width="7" height="1" fill="#555"/>
<rect x="88" y="457" width="7" height="1" fill="#555"/>
<rect x="88" y="407" width="7" height="1" fill="#555"/>
<rect x="88" y="357" width="7" height="1" fill="#555"/>
<rect x="88" y="307" width="7" height="1" fill="#555"/>
<rect x="88" y="257" width="7" height="1" fill="#555"/>
<rect x="88" y="207" width="7" height="1" fill="#555"/>
<rect x="88" y="157" width="7" height="1" fill="#555"/>
<g font-family="Liberation Sans" font-size="10" fill="#1e1e1e"><text transform="translate(81.5 707.5) rotate(-90) scale(.86 1)" text-anchor="middle">0</text><text transform="translate(81.5 657.5) rotate(-90) scale(.86 1)" text-anchor="middle">10</text><text transform="translate(81.5 607.5) rotate(-90) scale(.86 1)" text-anchor="middle">20</text><text transform="translate(81.5 557.5) rotate(-90) scale(.86 1)" text-anchor="middle">30</text><text transform="translate(81.5 507.5) rotate(-90) scale(.86 1)" text-anchor="middle">40</text><text transform="translate(81.5 457.5) rotate(-90) scale(.86 1)" text-anchor="middle">50</text><text transform="translate(81.5 407.5) rotate(-90) scale(.86 1)" text-anchor="middle">60</text><text transform="translate(81.5 357.5) rotate(-90) scale(.86 1)" text-anchor="middle">70</text><text transform="translate(81.5 307.5) rotate(-90) scale(.86 1)" text-anchor="middle">80</text><text transform="translate(81.5 257.5) rotate(-90) scale(.86 1)" text-anchor="middle">90</text><text transform="translate(81.5 207.5) rotate(-90) scale(.86 1)" text-anchor="middle">100</text></g>

<rect x="88" y="157" width="7" height="1" fill="#555"/>
<g clip-path="url(#vclip)"><text transform="translate(81.5 157.5) rotate(-90) scale(.86 1)" font-family="Liberation Sans" font-size="10" fill="#1e1e1e" text-anchor="middle">110</text></g>
<defs><clipPath id="vclip"><rect x="72" y="155" width="30" height="600"/></clipPath></defs>
<path d="M85 378 L85 390 L91 384 Z" fill="#000"/>
<rect x="1138" y="155" width="16" height="577" fill="#f7f7f7"/>
<rect x="1143" y="242" width="8" height="329" rx="4" fill="#808080"/>
<rect x="95" y="732" width="1059" height="16" fill="#f7f7f7"/>
<rect x="1083" y="732" width="71" height="16" fill="#ececec"/>
<text x="1153.5" y="744.8" font-family="Liberation Sans" font-size="13.4" fill="#111" text-anchor="end">10 &lt; 100</text>
</svg>
<!--/DOC-->
<!--RP-->
<svg class="a" style="left:1154px;top:108px" width="346" height="690" viewBox="1154 108 346 690">
<defs>
<linearGradient id="rtbg" x1="0" y1="0" x2="1" y2="0"><stop offset="0" stop-color="#eeeeee"/><stop offset=".6" stop-color="#d6d6d6"/><stop offset=".93" stop-color="#c4c4c4"/><stop offset=".95" stop-color="#b0b0b0"/><stop offset="1" stop-color="#b4b4b4"/></linearGradient>
<linearGradient id="ttl" x1="0" y1="0" x2="0" y2="1"><stop offset="0" stop-color="#eaeaea"/><stop offset="1" stop-color="#d9d9d9"/></linearGradient>
<linearGradient id="lbtn" x1="0" y1="0" x2="0" y2="1"><stop offset="0" stop-color="#e6e6e6"/><stop offset=".5" stop-color="#f0f0f0"/><stop offset="1" stop-color="#f4f4f4"/></linearGradient>
<g id="eye"><path d="M-8 0 Q-4 -5.5 0 -5.5 Q4 -5.5 8 0 Q4 5.5 0 5.5 Q-4 5.5 -8 0 Z" fill="#000"/><path d="M-5.5 0.3 Q-3 -3.2 0 -3.2 Q3 -3.2 5.5 0.3 Q3 2.6 0 2.6 Q-3 2.6 -5.5 0.3Z" fill="#fff"/><circle cx="0" cy="0" r="2.8" fill="#000"/><circle cx="-.8" cy="-1" r=".8" fill="#fff"/></g>
<g id="pencil"><path d="M-6.5 7 L-5.5 3.5 L4.5 -6.5 Q5.8 -7.5 7 -6.3 Q7.8 -5 6.8 -4 L-3.2 6 Z" fill="#e8a838" stroke="#8a5a10" stroke-width=".7"/><path d="M4.5 -6.5 Q5.8 -7.5 7 -6.3 Q7.8 -5 6.8 -4 L5.2 -5.5 Z" fill="#e82020"/><path d="M-6.5 7 L-5.8 4.8 L-4.7 5.9 Z" fill="#333"/></g>
<g id="win"><rect x="0.5" y="0.5" width="27.2" height="27.2" fill="#fff" stroke="#3a3a3a" stroke-width=".9"/><rect x="0.2" y="0.2" width="27.8" height="4.6" fill="#000"/><rect x="1" y="1" width="3.6" height="3.2" fill="#fff"/></g>
</defs>
<rect x="1154" y="108" width="2" height="690" fill="#bcbcbc"/>
<rect x="1156" y="108" width="299" height="690" fill="#fff"/>
<rect x="1156" y="108" width="299" height="22.5" fill="url(#ttl)"/><rect x="1156" y="130" width="299" height="1" fill="#c4c4c4"/>
<circle cx="1164" cy="118.3" r="7" fill="#6a6a6a"/><path d="M1161 115.3 L1167 121.3 M1167 115.3 L1161 121.3" stroke="#fff" stroke-width="1.8"/>
<circle cx="1182" cy="118.3" r="7" fill="#6a6a6a"/><rect x="1180.5" y="114.5" width="5" height="4" fill="none" stroke="#fff" stroke-width="1.1"/><rect x="1178" y="117" width="5" height="4" fill="#6a6a6a" stroke="#fff" stroke-width="1.1"/>
<text x="1322" y="123" font-family="Liberation Sans" font-size="12" fill="#2e2e2e" text-anchor="middle">Liste des calques</text>
<rect x="1156.5" y="131.5" width="58" height="24" fill="url(#lbtn)" stroke="#b2b2b2" stroke-width="1.2"/>
<rect x="1215.5" y="131.5" width="58" height="24" fill="url(#lbtn)" stroke="#b2b2b2" stroke-width="1.2"/>
<rect x="1275.5" y="131.5" width="58" height="24" fill="url(#lbtn)" stroke="#b2b2b2" stroke-width="1.2"/>
<rect x="1335.5" y="131.5" width="58" height="24" fill="url(#lbtn)" stroke="#b2b2b2" stroke-width="1.2"/>
<rect x="1395.5" y="131.5" width="59" height="24" fill="url(#lbtn)" stroke="#b2b2b2" stroke-width="1.2"/>
<rect x="1156" y="155" width="299" height="1.5" fill="#b6b6b6"/>
<use href="#eye" x="1185" y="143"/>
<g opacity=".4"><use href="#eye" x="1244.5" y="143"/></g>
<path d="M1305 137.5 V149 M1299.3 143.3 H1310.7" stroke="#e80000" stroke-width="2.6"/>
<path d="M1359 143.3 H1371" stroke="#e80000" stroke-width="2.2"/>
<use href="#pencil" x="1425" y="143"/>
<rect x="1161.5" y="162.5" width="15.5" height="9" fill="none" stroke="#000" stroke-width="1"/>
<text x="1183.5" y="172" font-family="Liberation Sans" font-size="13" fill="#000">0</text>
<use href="#pencil" x="1401" y="167"/>
<use href="#eye" x="1423" y="167"/>
<path d="M1441 166 V163.5 Q1441 159.5 1445 159.5 Q1449 159.5 1449 163.5 V166" fill="none" stroke="#c0c0c0" stroke-width="1.3"/><rect x="1440.3" y="165.5" width="9.4" height="7" rx=".8" fill="#c0c0c0"/>
<rect x="1455" y="108" width="45" height="690" fill="url(#rtbg)"/>
<rect x="1454" y="108" width="1" height="690" fill="#c8c8c8"/>
<g fill="#9a9a9a"><rect x="1462.0" y="116.5" width="1.4" height="1.4"/><rect x="1467.3" y="116.5" width="1.4" height="1.4"/><rect x="1472.6" y="116.5" width="1.4" height="1.4"/><rect x="1477.9" y="116.5" width="1.4" height="1.4"/><rect x="1483.2" y="116.5" width="1.4" height="1.4"/><rect x="1488.5" y="116.5" width="1.4" height="1.4"/></g>
<rect x="1456" y="120.5" width="42" height="41.5" rx="6" fill="#b8b8b8"/>
<rect x="1456" y="417" width="42" height="43" rx="6" fill="#b8b8b8"/>
<g stroke="#555" stroke-width="1" stroke-dasharray="1.2 2.2"><line x1="1458" y1="261.5" x2="1499" y2="261.5"/><line x1="1458" y1="409.5" x2="1499" y2="409.5"/></g>
<use href="#win" x="1463" y="127"/>
<use href="#win" x="1463" y="173.5"/>
<use href="#win" x="1463" y="220.5"/>
<use href="#win" x="1463" y="276"/>
<use href="#win" x="1463" y="322"/>
<use href="#win" x="1463" y="368"/>
<use href="#win" x="1463" y="424"/>
<use href="#win" x="1463" y="471"/>
<g transform="translate(1470 136)"><path d="M0 5.5 L7.5 1.5 L7.5 10 L0 14 Z" fill="#c4c4c4" stroke="#555" stroke-width=".5"/><path d="M2.3 4.5 L10 0.5 L10 9.5 L2.3 13.3 Z" fill="#e4e4e4" stroke="#555" stroke-width=".5"/><path d="M4.5 3.5 L13.5 -1 L13.5 9 L4.5 13 Z" fill="#fff" stroke="#555" stroke-width=".5"/><path d="M6.5 11 L11.5 3 M8.5 9.5 L11 9" stroke="#e84040" stroke-width=".7"/></g>
<rect x="1470.3" y="184.5" width="10.7" height="7.2" fill="#f6ecc4" stroke="#555" stroke-width=".6"/><circle cx="1479.5" cy="190.8" r="4" fill="#f6ecc4" fill-opacity=".8" stroke="#555" stroke-width=".6"/>
<rect x="1468.5" y="232" width="17" height="10" rx="2.5" fill="#f6f6f6" stroke="#b8c8e0" stroke-width=".8"/>
<g fill="#000"><rect x="1468.5" y="284" width="4" height="3"/><rect x="1468.5" y="289.5" width="4" height="3"/><rect x="1468.5" y="295" width="4" height="3"/></g><g fill="none" stroke="#333" stroke-width=".6"><rect x="1474.5" y="284" width="12.5" height="3"/><rect x="1474.5" y="289.5" width="12.5" height="3"/><rect x="1474.5" y="295" width="12.5" height="3"/></g>
<defs><linearGradient id="fung" x1="0" y1="0" x2="1" y2="0"><stop offset="0" stop-color="#f0f0f0"/><stop offset=".5" stop-color="#a8a8a8"/><stop offset="1" stop-color="#d8d8d8"/></linearGradient>
<linearGradient id="scrg" x1="0" y1="0" x2="0" y2="1"><stop offset="0" stop-color="#bbb"/><stop offset=".5" stop-color="#666"/><stop offset="1" stop-color="#999"/></linearGradient></defs>
<path d="M1470 332.5 L1484 332.5 L1479 339 L1479 345 L1476.5 344 L1476 339 Z" fill="url(#fung)" stroke="#444" stroke-width=".5"/>
<ellipse cx="1477" cy="332.5" rx="7" ry="1.5" fill="#555"/>
<path d="M1469.5 377 L1474 380.3 L1474 387.7 L1469.5 391 Z" fill="#e8e8e8" stroke="#333" stroke-width=".7"/>
<path d="M1474 380.5 H1483 Q1484.8 380.5 1484.8 382.5 V386.5 Q1484.8 388.5 1483 388.5 H1474 Z" fill="url(#scrg)"/>
<rect x="1474" y="380.5" width="3" height="8" fill="#fff"/>
<path d="M1467 384.3 H1488" stroke="#f08080" stroke-width=".8" stroke-dasharray="1.5 1" opacity=".8"/>
<g fill="#666"><rect x="1467" y="433" width="12" height=".8"/><rect x="1467" y="436" width="13" height=".8"/><rect x="1467" y="439" width="13" height=".8"/><rect x="1467" y="442" width="14" height=".8"/></g><rect x="1464" y="445.5" width="26" height="5.5" fill="none" stroke="#333" stroke-width=".5"/><rect x="1474" y="447.3" width="14" height="1.2" fill="#333"/><rect x="1465.5" y="447" width="1.5" height="2" fill="#333"/>
<rect x="1469.5" y="480" width="15" height="16" rx="1" fill="#c8902e" stroke="#8a5a10" stroke-width=".5"/><rect x="1471.3" y="481.8" width="11.4" height="12.5" fill="#f8f8f8"/><rect x="1474" y="478.3" width="6" height="3.5" rx="1" fill="#999"/><path d="M1472.5 485 H1481.5 M1472.5 487 H1481.5 M1472.5 489 H1480" stroke="#bbb" stroke-width=".6"/>
</svg>
<!--/RP-->
<!--CMD-->
<svg class="a" style="left:0;top:748px" width="1500" height="96" viewBox="0 748 1500 96">
<defs><linearGradient id="tip" x1="0" y1="0" x2="0" y2="1"><stop offset="0" stop-color="#f6f8fc"/><stop offset="1" stop-color="#dfe4ec"/></linearGradient>
<linearGradient id="cbtn" x1="0" y1="0" x2="0" y2="1"><stop offset="0" stop-color="#e6e6e6"/><stop offset="1" stop-color="#f4f4f4"/></linearGradient></defs>
<rect x="72" y="748" width="1082" height="2" fill="#bababa"/>
<rect x="72" y="750" width="1081" height="20.3" fill="#fff"/><rect x="72" y="750" width="1.2" height="20.3" fill="#c4c4c4"/>
<rect x="72" y="770" width="1081" height="1.2" fill="#bdbdbd"/>
<rect x="72" y="771.2" width="1081" height="26.8" fill="#ececec"/>
<rect x="164" y="776" width="962.6" height="18.4" fill="#fff"/>
<rect x="1127.5" y="772.5" width="25" height="25" fill="url(#cbtn)" stroke="#acacac" stroke-width="1"/>
<rect x="1133.5" y="780.5" width="13.5" height="9.5" fill="#ececec" stroke="#444" stroke-width="1"/><rect x="1133" y="780" width="14.5" height="2.7" fill="#000"/><rect x="1143.3" y="780.8" width="1" height="1" fill="#bbb"/>
<rect x="1152.6" y="748" width="1.5" height="50" fill="#a8a8a8"/>
<text x="77" y="762.6" font-family="Liberation Sans" font-size="13.9" letter-spacing="-.2" fill="#0000e0"><tspan font-style="italic">Commande:</tspan> line</text>
<text x="73" y="789.8" font-family="Liberation Sans" font-size="13.7" fill="#111">Premier point :</text>
<rect x="0" y="798" width="1500" height="46" fill="#dcdcdc"/>
<rect x="0" y="797.5" width="1500" height=".8" fill="#cfcfcf"/>
<text x="2" y="816" font-family="Liberation Sans" font-size="10" fill="#1a1a1a" letter-spacing=".35">43.4,64.6</text>
<text x="2" y="836" font-family="Liberation Sans" font-size="10" fill="#1a1a1a" letter-spacing=".35">@3.4,4.6</text>
<rect x="253.5" y="802" width="1" height="40" fill="#777"/><rect x="254.5" y="802" width="1" height="40" fill="#f4f4f4"/>
<text x="256" y="816" font-family="Liberation Sans" font-size="10" fill="#1a1a1a" letter-spacing=".2">77.8249&lt;56°</text>
<text x="256" y="836" font-family="Liberation Sans" font-size="10" fill="#1a1a1a" letter-spacing=".2">@5.7201&lt;54°</text>
<rect x="513" y="801.5" width="187" height="42.5" fill="#e0b4b8"/>
<g stroke="#f04848" stroke-width="1" opacity=".9"><line x1="504" y1="801.5" x2="708" y2="801.5"/><line x1="504" y1="842" x2="708" y2="842"/><line x1="513" y1="792" x2="513" y2="844"/><line x1="700" y1="792" x2="700" y2="844"/></g>
<circle cx="509" cy="822" r="2.8" fill="#c8c8c8"/>
<text x="698" y="825.5" font-family="Liberation Sans" font-size="9.4" fill="#1a1a1a" text-anchor="end" letter-spacing=".33">Premier point</text>
<rect x="532.5" y="788" width="158" height="25" rx="3" fill="#000" opacity=".25"/>
<rect x="531.5" y="786.8" width="157.5" height="24.5" rx="3" fill="url(#tip)" stroke="#a8acb4" stroke-width="1"/>
<text x="536" y="804.5" font-family="Liberation Sans" font-size="14" fill="#000">Attente du premier point</text>
<path d="M726.3 806.5 Q735.5 806.5 735.5 817 V826 Q735.5 836.5 726.3 836.5 Q717.2 836.5 717.2 826 V817 Q717.2 806.5 726.3 806.5 Z" fill="#fff" stroke="#333" stroke-width=".9"/>
<path d="M717.5 820.5 Q726.3 823.5 735.2 820.5 M726.3 807 V820" fill="none" stroke="#333" stroke-width=".8"/>
<rect x="725" y="809.5" width="2.6" height="6.5" rx="1.3" fill="#fff" stroke="#333" stroke-width=".7"/>
<text x="754" y="825.5" font-family="Liberation Sans" font-size="9.4" fill="#1a1a1a" letter-spacing=".3">Annuler</text>
<circle cx="943" cy="822" r="2.8" fill="#c8c8c8"/>
<text x="949" y="825.5" font-family="Liberation Sans" font-size="9.4" fill="#1a1a1a" letter-spacing=".36">Aucune des entités sélectionnées.</text>
<circle cx="1272" cy="822" r="2.8" fill="#c8c8c8"/>
</svg>
<!--/CMD-->
</body></html>
